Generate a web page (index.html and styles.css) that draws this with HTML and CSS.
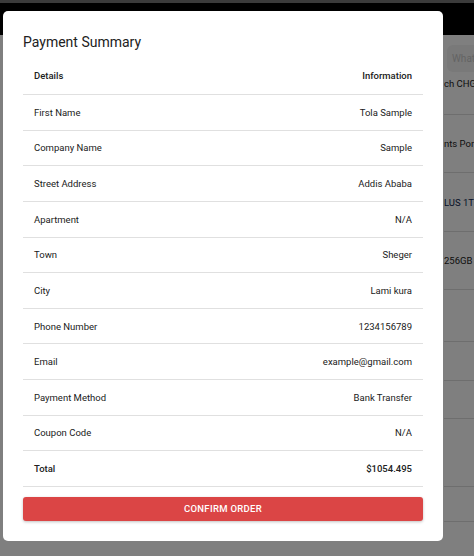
FILE: index.html
```html
<!DOCTYPE html>
<html>
<head>
<meta charset="utf-8">
<link rel="stylesheet" href="styles.css">
</head>
<body>
<div class="page">
  <div class="topbar"></div>
  <div class="bg-list">
    <div class="bg-row bg-first">
      <div class="search">What</div>
      <div class="bg-text">ch CHG</div>
    </div>
    <div class="bg-row r58"><span class="bg-text">nts Port</span></div>
    <div class="bg-row r59"><span class="bg-text blue">LUS 1TE</span></div>
    <div class="bg-row r58"><span class="bg-text">256GB ...</span></div>
    <div class="bg-row r52"></div>
    <div class="bg-row r39"></div>
    <div class="bg-row r38"></div>
    <div class="bg-row r68"></div>
    <div class="bg-row r35"></div>
  </div>
</div>
<div class="backdrop"></div>
<div class="dialog">
  <h2 class="title">Payment Summary</h2>
  <div class="table">
    <div class="row head"><span>Details</span><span>Information</span></div>
    <div class="row"><span>First Name</span><span>Tola Sample</span></div>
    <div class="row"><span>Company Name</span><span>Sample</span></div>
    <div class="row"><span>Street Address</span><span>Addis Ababa</span></div>
    <div class="row"><span>Apartment</span><span>N/A</span></div>
    <div class="row"><span>Town</span><span>Sheger</span></div>
    <div class="row"><span>City</span><span>Lami kura</span></div>
    <div class="row"><span>Phone Number</span><span>1234156789</span></div>
    <div class="row"><span>Email</span><span>example@gmail.com</span></div>
    <div class="row"><span>Payment Method</span><span>Bank Transfer</span></div>
    <div class="row"><span>Coupon Code</span><span>N/A</span></div>
    <div class="row total"><span>Total</span><span>$1054.495</span></div>
  </div>
  <button class="confirm">CONFIRM ORDER</button>
</div>
</body>
</html>
```
FILE: styles.css
```css
* { box-sizing: border-box; }
html, body { margin: 0; padding: 0; }
body {
  width: 474px;
  height: 556px;
  overflow: hidden;
  font-family: Roboto, "Liberation Sans", sans-serif;
  background: #fff;
}
.page { width: 474px; height: 556px; background: #fff; }
.topbar {
  height: 35px;
  background: #000;
  border-top: 3px solid #777;
}
.bg-list { padding-left: 444px; }
.bg-row {
  border-bottom: 1px solid #dcdcdc;
  display: flex;
  align-items: center;
  white-space: nowrap;
  overflow: hidden;
}
.bg-first {
  height: 80px;
  flex-direction: column;
  align-items: flex-start;
  justify-content: flex-start;
  padding-top: 10px;
}
.search {
  width: 60px;
  height: 27px;
  margin-left: 3px;
  border-radius: 6px;
  background: #f2f2f2;
  color: #c8c8c8;
  font-size: 10px;
  line-height: 27px;
  padding-left: 5px;
}
.bg-text {
  font-size: 9.5px;
  color: #222;
}
.bg-first .bg-text { margin-top: 6px; }
.bg-text.blue { color: #0a2450; }
.r58 { height: 58px; }
.r59 { height: 59px; }
.r52 { height: 52px; }
.r39 { height: 39px; }
.r38 { height: 38px; }
.r68 { height: 68px; }
.r35 { height: 35px; }

.backdrop {
  position: fixed;
  inset: 0;
  background: rgba(0, 0, 0, 0.5);
}
.dialog {
  position: fixed;
  left: 3px;
  top: 11px;
  width: 440px;
  height: 530px;
  background: #fff;
  border-radius: 5px;
  padding: 20px;
  display: flex;
  flex-direction: column;
}
.title {
  margin: 0;
  height: 28.4px;
  flex-shrink: 0;
  font-size: 14px;
  font-weight: 400;
  line-height: 22px;
  color: #212121;
}
.table { display: flex; flex-direction: column; }
.row {
  height: 35.64px;
  flex-shrink: 0;
  padding: 0 11px;
  display: flex;
  justify-content: space-between;
  align-items: center;
  border-bottom: 1px solid #e0e0e0;
  font-size: 9.5px;
  color: #212121;
}
.row.head { align-items: flex-start; padding-top: 11px; }
.row.head, .row.total { font-weight: 500; }
.confirm {
  margin-top: 10px;
  height: 24px;
  flex-shrink: 0;
  border: none;
  border-radius: 3px;
  background: #db4545;
  color: #fff;
  font-family: Roboto, "Liberation Sans", sans-serif;
  font-weight: 500;
  font-size: 9.5px;
  letter-spacing: 0.3px;
  box-shadow: 0 1px 3px rgba(0,0,0,0.25);
  padding: 0;
}
```
